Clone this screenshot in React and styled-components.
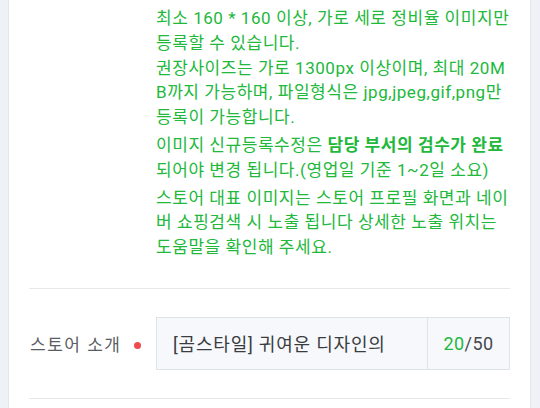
import React from "react";
import styled, { createGlobalStyle } from "styled-components";

const GlobalStyle = createGlobalStyle`
  html, body {
    margin: 0;
    padding: 0;
    background: #eef1f5;
    font-family: Roboto, "Noto Sans CJK KR", "Noto Sans", sans-serif;
  }
`;

const Page = styled.div`
  display: flex;
  padding-left: 8px;
  height: 408px;
  overflow: hidden;
`;

const Card = styled.div`
  box-sizing: border-box;
  flex: 0 0 523px;
  background: #ffffff;
  border-left: 1px solid #e3e6eb;
  border-right: 1px solid #e3e6eb;
  padding: 6px 20px 0 20px;
`;

const Section = styled.div`
  display: grid;
  grid-template-columns: 127px 1fr;
  padding-bottom: ${(p) => p.$pb || 0}px;
  border-bottom: 1px solid #e6e8ec;
`;

const Notes = styled.div`
  grid-column: 2;
  color: #21b83c;
  font-size: 17px;
  line-height: 24.8px;
  white-space: nowrap;
  letter-spacing: 0.55px;
`;

const Para = styled.p`
  margin: ${(p) => p.$mt || 0}px 0 0 0;
`;

const Strong = styled.b`
  font-weight: 700;
`;

const Row = styled.div`
  display: grid;
  grid-template-columns: 127px 1fr;
  align-items: center;
  padding: 28px 0;
  border-bottom: 1px solid #e6e8ec;
`;

const Label = styled.div`
  display: flex;
  align-items: center;
  gap: 13px;
  font-size: 17px;
  letter-spacing: 1.5px;
  color: #5a5d63;
  padding-left: 1px;
`;

const Dot = styled.span`
  width: 7px;
  height: 7px;
  border-radius: 50%;
  background: #f04a4f;
  margin-top: 4px;
`;

const InputBox = styled.div`
  display: flex;
  height: 53px;
  box-sizing: border-box;
  border: 1px solid #dfe2e7;
  background: #f7f8fb;
`;

const InputText = styled.div`
  flex: 1;
  display: flex;
  align-items: center;
  padding-left: 16px;
  color: #3a3c40;
  font-size: 18px;
  letter-spacing: 0.8px;
`;

const Counter = styled.div`
  flex: 0 0 81px;
  display: flex;
  align-items: center;
  justify-content: center;
  border-left: 1px solid #dfe2e7;
  color: #45484d;
  font-size: 18px;
  letter-spacing: 0.4px;
`;

const Count = styled.span`
  color: #21b83c;
`;

export default function App() {
  return (
    <>
      <GlobalStyle />
      <Page>
        <Card>
          <Section $pb={28}>
            <Notes>
              <Para>
                최소 160 * 160 이상, 가로 세로 정비율 이미지만
                <br />
                등록할 수 있습니다.
              </Para>
              <Para>
                권장사이즈는 가로 1300px 이상이며, 최대 20M
                <br />
                B까지 가능하며, 파일형식은 jpg,jpeg,gif,png만
                <br />
                등록이 가능합니다.
              </Para>
              <Para $mt={3}>
                이미지 신규등록수정은 <Strong>담당 부서의 검수가 완료</Strong>
                <br />
                되어야 변경 됩니다.(영업일 기준 1~2일 소요)
              </Para>
              <Para $mt={3}>
                스토어 대표 이미지는 스토어 프로필 화면과 네이
                <br />
                버 쇼핑검색 시 노출 됩니다 상세한 노출 위치는
                <br />
                도움말을 확인해 주세요.
              </Para>
            </Notes>
          </Section>
          <Row>
            <Label>
              스토어 소개
              <Dot />
            </Label>
            <InputBox>
              <InputText>[곰스타일] 귀여운 디자인의</InputText>
              <Counter>
                <Count>20</Count>/50
              </Counter>
            </InputBox>
          </Row>
        </Card>
      </Page>
    </>
  );
}
